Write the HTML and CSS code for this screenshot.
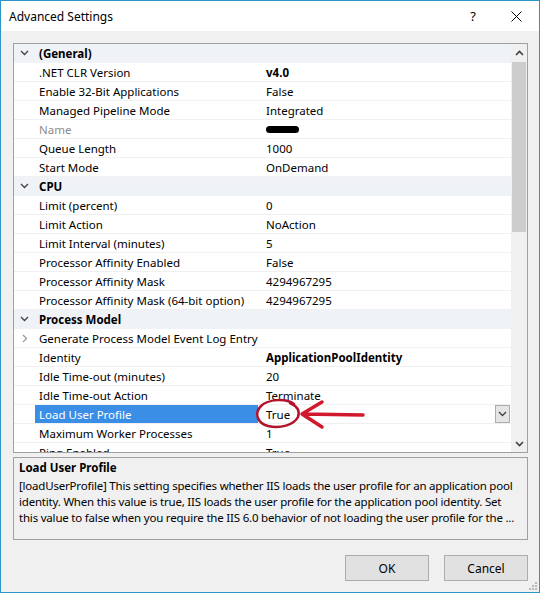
FILE: index.html
```html
<!DOCTYPE html>
<html lang="en">
<head>
    <meta charset="UTF-8">
    <meta name="viewport" content="width=device-width, initial-scale=1.0">
    <title>Advanced Settings</title>
    <link rel="stylesheet" href="styles.css">
</head>
<body>
    <div class="window">
        <div class="titlebar">
            <span class="title">Advanced Settings</span>
            <span class="help">?</span>
            <span class="close">
                <svg width="11" height="11" viewBox="0 0 11 11"><path d="M0.5 0.5 L10.5 10.5 M10.5 0.5 L0.5 10.5" stroke="#000" stroke-width="1"/></svg>
            </span>
        </div>

        <div class="content">
            <div class="grid">
                <div class="rows">
                    <div class="row cat">
                        <span class="gutter"><svg class="chev" width="9" height="6" viewBox="0 0 9 6"><path d="M1 1 L4.5 4.5 L8 1" /></svg></span>
                        <span class="name">(General)</span>
                    </div>
                    <div class="row"><span class="gutter"></span><span class="name">.NET CLR Version</span><span class="value bold">v4.0</span></div>
                    <div class="row"><span class="gutter"></span><span class="name">Enable 32-Bit Applications</span><span class="value">False</span></div>
                    <div class="row"><span class="gutter"></span><span class="name">Managed Pipeline Mode</span><span class="value">Integrated</span></div>
                    <div class="row"><span class="gutter"></span><span class="name disabled">Name</span><span class="value"><span class="hidden-value"></span></span></div>
                    <div class="row"><span class="gutter"></span><span class="name">Queue Length</span><span class="value">1000</span></div>
                    <div class="row"><span class="gutter"></span><span class="name">Start Mode</span><span class="value">OnDemand</span></div>

                    <div class="row cat">
                        <span class="gutter"><svg class="chev" width="9" height="6" viewBox="0 0 9 6"><path d="M1 1 L4.5 4.5 L8 1" /></svg></span>
                        <span class="name">CPU</span>
                    </div>
                    <div class="row"><span class="gutter"></span><span class="name">Limit (percent)</span><span class="value">0</span></div>
                    <div class="row"><span class="gutter"></span><span class="name">Limit Action</span><span class="value">NoAction</span></div>
                    <div class="row"><span class="gutter"></span><span class="name">Limit Interval (minutes)</span><span class="value">5</span></div>
                    <div class="row"><span class="gutter"></span><span class="name">Processor Affinity Enabled</span><span class="value">False</span></div>
                    <div class="row"><span class="gutter"></span><span class="name">Processor Affinity Mask</span><span class="value">4294967295</span></div>
                    <div class="row"><span class="gutter"></span><span class="name">Processor Affinity Mask (64-bit option)</span><span class="value">4294967295</span></div>

                    <div class="row cat">
                        <span class="gutter"><svg class="chev" width="9" height="6" viewBox="0 0 9 6"><path d="M1 1 L4.5 4.5 L8 1" /></svg></span>
                        <span class="name">Process Model</span>
                    </div>
                    <div class="row">
                        <span class="gutter"><svg class="chev light" width="6" height="9" viewBox="0 0 6 9"><path d="M1 1 L4.5 4.5 L1 8" /></svg></span>
                        <span class="name">Generate Process Model Event Log Entry</span><span class="value"></span>
                    </div>
                    <div class="row"><span class="gutter"></span><span class="name">Identity</span><span class="value bold">ApplicationPoolIdentity</span></div>
                    <div class="row"><span class="gutter"></span><span class="name">Idle Time-out (minutes)</span><span class="value">20</span></div>
                    <div class="row"><span class="gutter"></span><span class="name">Idle Time-out Action</span><span class="value">Terminate</span></div>
                    <div class="row selected">
                        <span class="gutter"></span><span class="name">Load User Profile</span>
                        <span class="value">True
                            <span class="dropdown"><svg width="9" height="6" viewBox="0 0 9 6"><path d="M1 1 L4.5 4.5 L8 1" /></svg></span>
                        </span>
                    </div>
                    <div class="row"><span class="gutter"></span><span class="name">Maximum Worker Processes</span><span class="value">1</span></div>
                    <div class="row"><span class="gutter"></span><span class="name">Ping Enabled</span><span class="value">True</span></div>
                </div>

                <div class="scrollbar">
                    <span class="arrow"><svg width="9" height="6" viewBox="0 0 9 6"><path d="M1 5 L4.5 1.5 L8 5" /></svg></span>
                    <div class="track"><div class="thumb"></div></div>
                    <span class="arrow"><svg width="9" height="6" viewBox="0 0 9 6"><path d="M1 1 L4.5 4.5 L8 1" /></svg></span>
                </div>
            </div>

            <div class="desc">
                <div class="desc-title">Load User Profile</div>
                <div class="desc-text">
                    [loadUserProfile] This setting specifies whether IIS loads the user profile for an application pool<br>
                    identity. When this value is true, IIS loads the user profile for the application pool identity. Set<br>
                    this value to false when you require the IIS 6.0 behavior of not loading the user profile for the ...
                </div>
            </div>

            <div class="buttons">
                <button>OK</button>
                <button>Cancel</button>
            </div>
        </div>

        <!-- red marker drawn over the grid -->
        <svg class="marker" width="130" height="44" viewBox="0 0 130 44">
            <path d="M44 9 C36 3 18 4 11 11 C4 18 7 28 18 31 C30 34 44 30 48 22 C50 16 47 11 40 8" />
            <path d="M113 20 L52 19 M72 7 L52 19 L72 32" class="arrow-line" />
        </svg>

        <svg class="grip" width="8" height="8" viewBox="0 0 8 8">
            <rect x="6" y="0" width="2" height="2"/><rect x="3" y="3" width="2" height="2"/><rect x="6" y="3" width="2" height="2"/>
            <rect x="0" y="6" width="2" height="2"/><rect x="3" y="6" width="2" height="2"/><rect x="6" y="6" width="2" height="2"/>
        </svg>
    </div>
</body>
</html>
```

FILE: styles.css
```css
body {
    margin: 0;
    background-color: #f0f0f0;
}

.window {
    position: relative;
    width: 540px;
    height: 593px;
    box-sizing: border-box;
    border: 1px solid #2e93c8;
    background-color: #f0f0f0;
    font-family: "Noto Sans", "Open Sans", sans-serif;
    font-size: 11.5px;
    color: #000;
}

.titlebar {
    height: 30px;
    background-color: #fff;
    display: flex;
    align-items: center;
    padding-left: 8px;
}

.title {
    flex: 1;
    font-size: 12px;
}

.help {
    width: 14px;
    text-align: center;
    font-size: 13px;
    margin-right: 31px;
}

.close {
    display: flex;
    margin-right: 17px;
}

.content {
    padding: 12px 11px 0 12px;
}

.grid {
    display: flex;
    height: 410px;
    box-sizing: border-box;
    border: 1px solid #a0a0a0;
    background-color: #fff;
}

.rows {
    flex: 1;
    overflow: hidden;
}

.row {
    display: flex;
    align-items: center;
    height: 19px;
    box-sizing: border-box;
    border-bottom: 1px solid #f0f0f0;
    white-space: nowrap;
}

.row.cat {
    background-color: #eff2f7;
    border-bottom-color: #eff2f7;
    font-weight: bold;
}

.gutter {
    width: 21px;
    height: 100%;
    display: flex;
    align-items: center;
    justify-content: center;
    flex-shrink: 0;
}

.chev path,
.dropdown path,
.scrollbar path {
    fill: none;
    stroke: #404040;
    stroke-width: 1.3;
}

.chev.light path {
    stroke: #9a9a9a;
}

.name {
    width: 223px;
    height: 100%;
    display: flex;
    align-items: center;
    padding-left: 4px;
    box-sizing: border-box;
    flex-shrink: 0;
}

.name.disabled {
    color: #8c8c8c;
}

.value {
    flex: 1;
    height: 100%;
    display: flex;
    align-items: center;
    padding-left: 8px;
}

.value.bold {
    font-weight: bold;
}

.hidden-value {
    display: inline-block;
    width: 33px;
    height: 7px;
    border-radius: 4px;
    background-color: #000;
}

.row.selected .name {
    background-color: #3a8ee6;
    color: #fff;
}

.dropdown {
    margin-left: auto;
    margin-right: 1px;
    width: 13px;
    height: 16px;
    border: 1px solid #adadad;
    background-color: #e5e5e5;
    display: flex;
    align-items: center;
    justify-content: center;
}

.scrollbar {
    width: 16px;
    background-color: #f0f0f0;
    display: flex;
    flex-direction: column;
    align-items: center;
}

.scrollbar .arrow {
    height: 17px;
    display: flex;
    align-items: center;
}

.scrollbar path {
    stroke-width: 1.6;
}

.track {
    flex: 1;
    width: 100%;
}

.thumb {
    margin: 1px 1px 0 1px;
    height: 170px;
    background-color: #cdcdcd;
}

.desc {
    margin-top: 4px;
    height: 83px;
    box-sizing: border-box;
    border: 1px solid #a0a0a0;
    padding: 0 5px;
    white-space: nowrap;
    overflow: hidden;
}

.desc-title {
    font-weight: bold;
    line-height: 20px;
}

.desc-text {
    line-height: 16px;
    letter-spacing: -0.2px;
}

.buttons {
    display: flex;
    justify-content: flex-end;
    gap: 15px;
    margin-top: 15px;
}

button {
    width: 84px;
    height: 26px;
    font-family: inherit;
    font-size: 12px;
    background-color: #e1e1e1;
    border: 1px solid #adadad;
    color: #000;
    padding: 0;
}

.marker {
    position: absolute;
    left: 249px;
    top: 394px;
}

.marker path {
    fill: none;
    stroke: #b3122b;
    stroke-width: 2.5;
    stroke-linecap: round;
    stroke-linejoin: round;
}

.marker .arrow-line {
    stroke: #d0192c;
    stroke-width: 3.5;
}

.grip {
    position: absolute;
    right: 2px;
    bottom: 2px;
    fill: #b8b8b8;
}
```
